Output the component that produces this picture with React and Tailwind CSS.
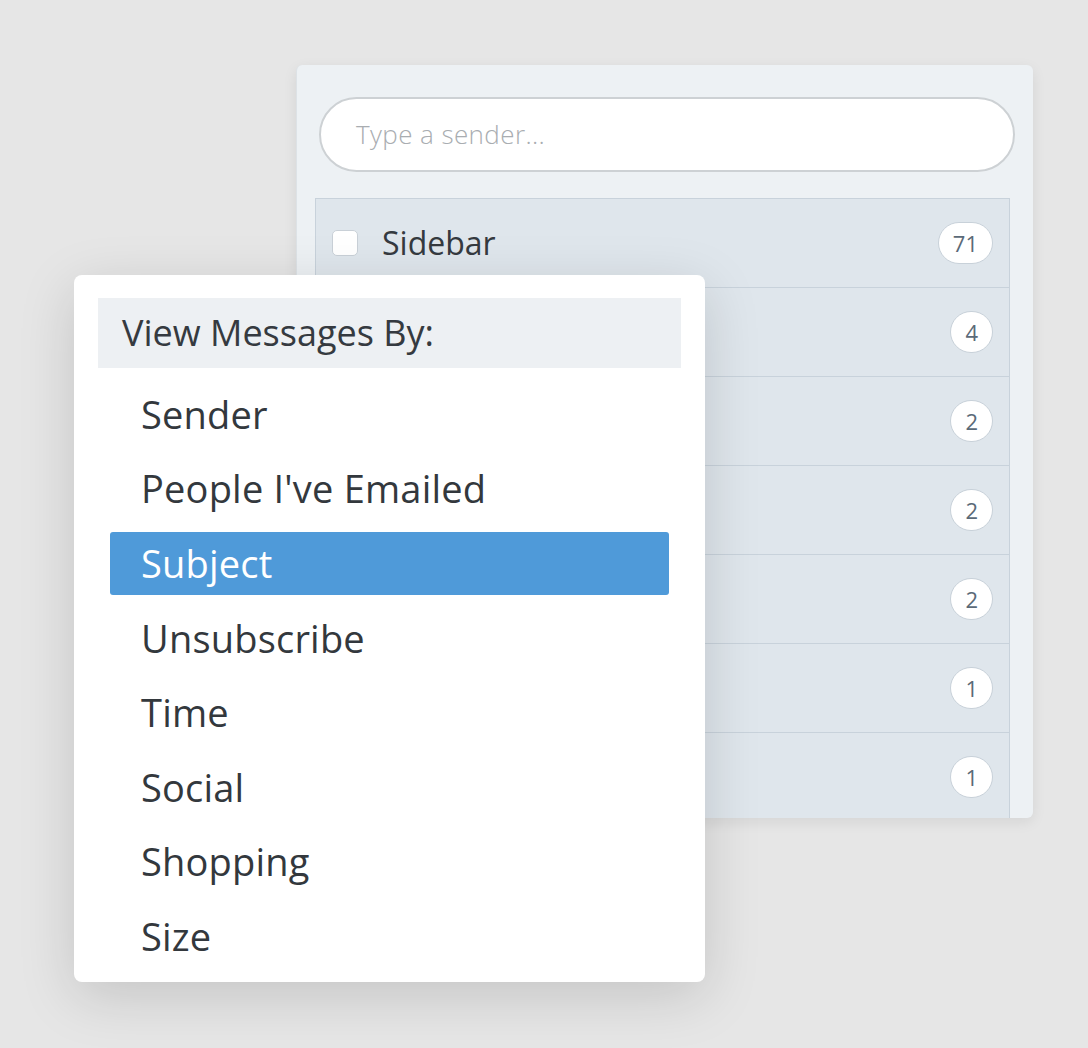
const rows = [
    { label: "Sidebar", count: 71 },
    { label: "", count: 4 },
    { label: "", count: 2 },
    { label: "", count: 2 },
    { label: "", count: 2 },
    { label: "", count: 1 },
    { label: "", count: 1 },
];

const options = ["Sender", "People I've Emailed", "Subject", "Unsubscribe", "Time", "Social", "Shopping", "Size"];

function SenderRow({ label, count }) {
    return (
        <div className="h-[89px] shrink-0 flex items-center border-b border-[#c8d2db] pl-[16px] pr-[16px]">
            <span className="w-[26px] h-[26px] rounded-[5px] bg-white border border-[#c9d0d7]" />
            <span className="ml-[24px] text-[32px] leading-none text-[#353a40]">{label}</span>
            <span className="ml-auto h-[42px] min-w-[42px] px-[14px] rounded-full bg-white border border-[#c8d1d9] flex items-center justify-center text-[22px] text-[#5b6a78]">
                {count}
            </span>
        </div>
    );
}

export default function App() {
    return (
        <div
            className="relative w-[1088px] h-[1048px] bg-[#e6e6e6] overflow-hidden pt-[65px] pl-[296px]"
            style={{ fontFamily: '"Open Sans", "Noto Sans", sans-serif' }}
        >
            {/* senders panel */}
            <div className="w-[737px] h-[753px] bg-[#edf1f4] rounded-[6px] overflow-hidden shadow-[0_4px_14px_rgba(0,0,0,0.08)] border-l border-[#dde2e6] px-[18px] pt-[32px] flex flex-col">
                <div className="ml-[4px] w-[696px] h-[75px] shrink-0 rounded-full bg-white border-2 border-[#cdd1d4] flex items-center pl-[35px]">
                    <span className="text-[26px] tracking-[0.4px] text-[#a9adb1] font-light">Type a sender...</span>
                </div>
                <div className="mt-[26px] w-[695px] border-t border-x border-[#c8d2db] bg-[#dfe6ec] flex flex-col">
                    {rows.map((r, i) => (
                        <SenderRow key={i} {...r} />
                    ))}
                </div>
            </div>

            {/* view-by menu */}
            <div className="absolute left-[74px] top-[275px] w-[631px] h-[707px] bg-white rounded-[8px] shadow-[0_14px_56px_rgba(0,0,0,0.15)] pt-[23px]">
                <div className="mx-[24px] h-[70px] bg-[#edf0f3] flex items-center pl-[24px] text-[36px] text-[#353a40]">
                    View Messages By:
                </div>
                <div className="mt-[9px] px-[36px]">
                    {options.map((o) => (
                        <div key={o} className="h-[74.6px] py-[6px]">
                            <div
                                className={
                                    o === "Subject"
                                        ? "h-full rounded-[3px] bg-[#4f9ad9] text-white flex items-center pl-[31px] text-[38px] tracking-[0.2px]"
                                        : "h-full flex items-center pl-[31px] text-[38px] tracking-[0.2px] text-[#33383d]"
                                }
                            >
                                {o}
                            </div>
                        </div>
                    ))}
                </div>
            </div>
        </div>
    );
}
